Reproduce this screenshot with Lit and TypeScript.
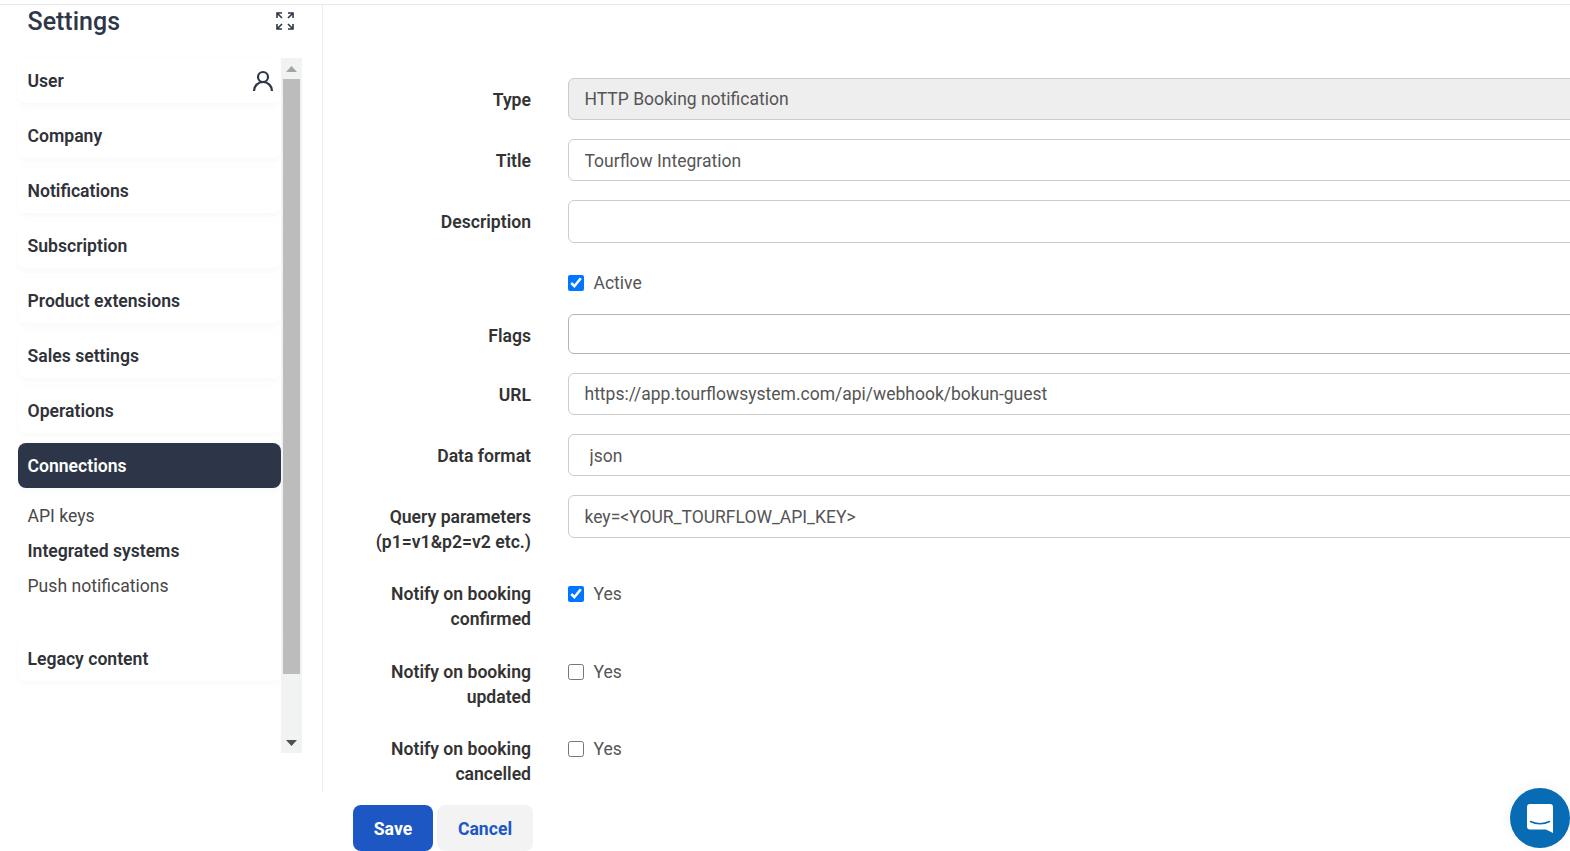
import { LitElement, html, css } from 'lit'
import { customElement } from 'lit/decorators.js'

const NAV_BEFORE = ['Company', 'Notifications', 'Subscription', 'Product extensions', 'Sales settings', 'Operations']

@customElement('app-root')
export class AppRoot extends LitElement {
  static styles = css`
    :host {
      display: block;
      height: 851px;
      overflow: hidden;
      position: relative;
      background: #fff;
      font-family: Roboto, 'Liberation Sans', sans-serif;
      font-size: 17.6px;
      color: #333;
    }

    .top {
      height: 4px;
      border-bottom: 1px solid #e8e8e8;
    }

    .body {
      display: flex;
      height: 787px;
    }

    /* ---- Sidebar ---- */
    .side {
      box-sizing: border-box;
      width: 323px;
      flex: none;
      border-right: 1px solid #eee;
      padding-left: 18px;
    }
    .side-head {
      display: flex;
      align-items: center;
      justify-content: space-between;
      height: 32px;
      padding: 0 27px 0 9.5px;
    }
    .side-head h1 {
      margin: 1px 0 0;
      font-size: 25px;
      font-weight: 500;
      line-height: 30px;
      color: #2d3748;
    }
    .side-head svg {
      display: block;
    }
    .side-body {
      display: flex;
      height: 695px;
      margin-top: 21px;
    }
    .nav {
      width: 263px;
      flex: none;
    }
    .item {
      box-sizing: border-box;
      display: flex;
      align-items: center;
      justify-content: space-between;
      height: 45px;
      margin-bottom: 10px;
      padding: 0 7px 0 9.5px;
      border-radius: 8px;
      font-weight: 600;
      color: #2f3238;
      box-shadow: 0 4px 6px rgba(0, 0, 0, 0.025), 0 -2px 4px rgba(0, 0, 0, 0.012);
    }
    .item.active {
      background: #2d3648;
      color: #fff;
    }
    .sub {
      padding: 1px 0 0 9.5px;
      margin-bottom: 32px;
    }
    .sub div {
      height: 35px;
      line-height: 35px;
      font-weight: 400;
      color: #484848;
    }
    .sub .current {
      font-weight: 600;
      color: #2f3238;
    }

    .scrollbar {
      width: 21px;
      flex: none;
      display: flex;
      flex-direction: column;
      background: #f1f3f3;
    }
    .arrow {
      height: 21px;
      flex: none;
      display: flex;
      align-items: center;
      justify-content: center;
    }
    .thumb {
      height: 595px;
      margin: 0 2px;
      background: #bcbcbc;
    }
    .track {
      flex: 1;
    }

    /* ---- Form ---- */
    .main {
      flex: 1;
      min-width: 0;
      overflow: hidden;
      padding-top: 73px;
    }
    .row {
      display: grid;
      grid-template-columns: 208px 1200px;
      column-gap: 37px;
      margin-bottom: 19px;
    }
    .row label {
      padding-top: 10px;
      line-height: 25px;
      text-align: right;
      font-weight: 600;
      color: #333;
    }
    .row.check {
      padding-top: 8.25px;
      margin-bottom: 19.25px;
    }
    .row.check.first {
      padding-top: 8.5px;
      margin-bottom: 19.5px;
    }
    .row.check label {
      padding-top: 0;
    }
    .field {
      box-sizing: border-box;
      width: 100%;
      height: 42px;
      margin: 0;
      padding: 0 15.5px;
      border: 1px solid #ccc;
      border-radius: 6px;
      background: #fff;
      color: #555;
      font: 400 17.5px Roboto, 'Liberation Sans', sans-serif;
      outline: none;
    }
    .field.nudge {
      padding-top: 1px;
    }
    .field.readonly {
      background: #eee;
    }
    .field.tall {
      height: 43px;
    }
    .field.flags {
      height: 40px;
      border-color: #b4b4b4;
    }
    .field.select {
      padding-left: 20.5px;
    }
    .yes {
      display: flex;
      align-items: center;
      gap: 9.5px;
      height: 24px;
      color: #555;
      font-size: 17.5px;
    }
    .yes input {
      width: 16px;
      height: 16px;
      margin: 0;
    }

    /* ---- Footer ---- */
    .foot {
      display: flex;
      gap: 4px;
      padding: 13px 0 0 353px;
    }
    .btn {
      box-sizing: border-box;
      height: 46px;
      padding: 2px 0 0;
      border: none;
      border-radius: 8px;
      font: 700 17.6px Roboto, 'Liberation Sans', sans-serif;
    }
    .btn.save {
      width: 80px;
      background: #1c57c3;
      color: #fff;
    }
    .btn.cancel {
      width: 96px;
      background: #f3f3f4;
      color: #1c57c3;
    }

    .chat {
      position: absolute;
      left: 1510px;
      top: 788px;
      width: 60px;
      height: 60px;
      border-radius: 50%;
      background: #076cb3;
      display: flex;
      align-items: center;
      justify-content: center;
      box-shadow: 0 0 14px rgba(0, 0, 0, 0.05);
    }
    .chat svg {
      margin-top: 1px;
    }
  `

  private _row(label: unknown, control: unknown, extra = '') {
    return html`<div class="row ${extra}"><label>${label}</label><div>${control}</div></div>`
  }

  private _check(text: string, checked: boolean) {
    return html`<div class="yes"><input type="checkbox" .checked=${checked} /><span>${text}</span></div>`
  }

  render() {
    return html`
      <div class="top"></div>
      <div class="body">
        <aside class="side">
          <div class="side-head">
            <h1>Settings</h1>
            <svg width="20" height="20" viewBox="0 0 20 20" fill="none" stroke="#2d3748" stroke-width="1.6">
              <path d="M2 7V2h5M2 2l5 5M18 7V2h-5M18 2l-5 5M2 13v5h5M2 18l5-5M18 13v5h-5M18 18l-5-5" />
            </svg>
          </div>
          <div class="side-body">
            <nav class="nav">
              <div class="item">
                <span>User</span>
                <svg width="22" height="22" viewBox="0 0 22 22" fill="none" stroke="#2d3748" stroke-width="2.2">
                  <circle cx="11" cy="7" r="5" />
                  <path d="M2 21c0-5 4-9 9-9s9 4 9 9" />
                </svg>
              </div>
              ${NAV_BEFORE.map((n) => html`<div class="item">${n}</div>`)}
              <div class="item active">Connections</div>
              <div class="sub">
                <div>API keys</div>
                <div class="current">Integrated systems</div>
                <div>Push notifications</div>
              </div>
              <div class="item">Legacy content</div>
            </nav>
            <div class="scrollbar">
              <div class="arrow">
                <svg width="11" height="6" viewBox="0 0 11 6"><path d="M5.5 0L11 6H0z" fill="#a3a3a3" /></svg>
              </div>
              <div class="thumb"></div>
              <div class="track"></div>
              <div class="arrow">
                <svg width="11" height="6" viewBox="0 0 11 6"><path d="M0 0h11L5.5 6z" fill="#505050" /></svg>
              </div>
            </div>
          </div>
        </aside>
        <main class="main">
          ${this._row('Type', html`<input class="field readonly" readonly value="HTTP Booking notification" />`)}
          ${this._row('Title', html`<input class="field nudge" value="Tourflow Integration" />`)}
          ${this._row('Description', html`<input class="field tall" />`)}
          ${this._row('', this._check('Active', true), 'check first')}
          ${this._row('Flags', html`<input class="field flags" />`)}
          ${this._row('URL', html`<input class="field" value="https://app.tourflowsystem.com/api/webhook/bokun-guest" />`)}
          ${this._row('Data format', html`<input class="field select nudge" value="json" />`)}
          ${this._row(html`Query parameters<br />(p1=v1&amp;p2=v2 etc.)`, html`<input class="field tall nudge" value="key=<YOUR_TOURFLOW_API_KEY>" />`)}
          ${this._row(html`Notify on booking<br />confirmed`, this._check('Yes', true), 'check')}
          ${this._row(html`Notify on booking<br />updated`, this._check('Yes', false), 'check')}
          ${this._row(html`Notify on booking<br />cancelled`, this._check('Yes', false), 'check')}
        </main>
      </div>
      <div class="foot">
        <button class="btn save">Save</button>
        <button class="btn cancel">Cancel</button>
      </div>
      <div class="chat">
        <svg width="26" height="29" viewBox="0 0 26 29">
          <path d="M3 0h20a3 3 0 0 1 3 3v26l-7-3.500H3a3 3 0 0 1-3-3V3a3 3 0 0 1 3-3z" fill="#fff" />
          <path d="M3.500 17.500c5.500 3 13.500 3 19 0" fill="none" stroke="#076cb3" stroke-width="1.500" stroke-linecap="round" />
        </svg>
      </div>
    `
  }
}
